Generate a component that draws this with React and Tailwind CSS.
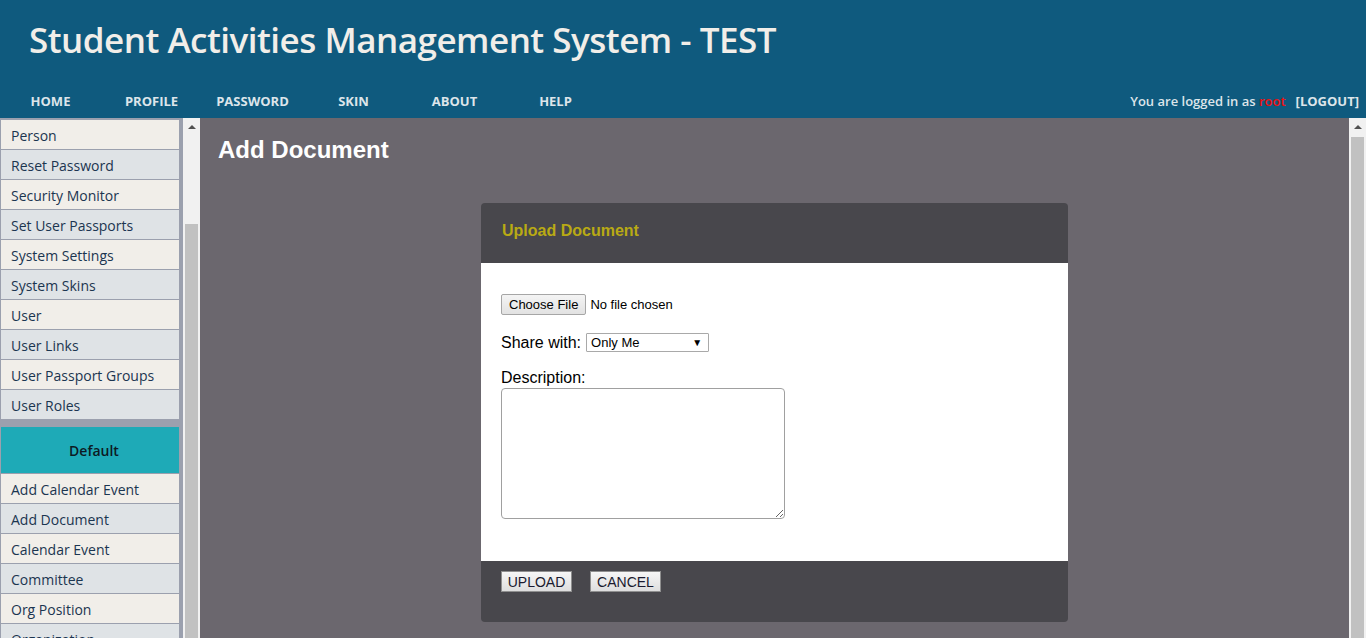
import { useState } from "react";

const navLinks = ["HOME", "PROFILE", "PASSWORD", "SKIN", "ABOUT", "HELP"];

const adminItems = [
  "Person",
  "Reset Password",
  "Security Monitor",
  "Set User Passports",
  "System Settings",
  "System Skins",
  "User",
  "User Links",
  "User Passport Groups",
  "User Roles",
];

const defaultItems = [
  "Add Calendar Event",
  "Add Document",
  "Calendar Event",
  "Committee",
  "Org Position",
  "Organization",
];

function SideItem({ label, index }) {
  return (
    <div
      className={`h-[30px] shrink-0 flex items-center pl-[10px] pt-[1px] border-b border-[#9ba0ae] text-[14px] text-[#1b3550] ${
        index % 2 === 0 ? "bg-[#f1eee9]" : "bg-[#dfe3e6]"
      }`}
    >
      {label}
    </div>
  );
}

function Scrollbar({ thumbTop }) {
  return (
    <div className="w-[17px] shrink-0 h-full bg-[#f1f1f1] flex flex-col items-center">
      <div className="h-[17px] w-full flex items-center justify-center shrink-0">
        <div className="w-0 h-0 border-l-[4px] border-r-[4px] border-b-[4px] border-l-transparent border-r-transparent border-b-[#505050]" />
      </div>
      <div className={`shrink-0 ${thumbTop}`} />
      <div className="flex-1 w-[13px] bg-[#c1c1c1]" />
    </div>
  );
}

export default function App() {
  const [description, setDescription] = useState("");

  return (
    <div
      className="h-[638px] w-full flex flex-col overflow-hidden"
      style={{ fontFamily: "'Open Sans', 'Noto Sans', sans-serif" }}
    >
      {/* HEADER */}
      <header className="h-[118px] shrink-0 bg-[#0f5a7e] flex flex-col">
        <div className="h-[82px] flex items-center pl-[29px] pb-[3px]">
          <h1 className="text-[35px] leading-none font-semibold text-[#f1eee9] tracking-[-0.5px]">
            Student Activities Management System - TEST
          </h1>
        </div>
        <div className="h-[36px] flex items-center pt-[4px]">
          <nav className="flex">
            {navLinks.map((link) => (
              <a
                key={link}
                href="#"
                className="w-[101px] text-center text-[13px] font-bold text-[#dde5ea]"
              >
                {link}
              </a>
            ))}
          </nav>
          <div className="ml-auto pr-[7px] text-[13px] font-semibold text-[#dde5ea]">
            You are logged in as <span className="text-[#ee1111]">root</span>
            <a href="#" className="ml-[10px] font-bold">
              [LOGOUT]
            </a>
          </div>
        </div>
      </header>

      <div className="flex-1 flex min-h-0">
        {/* SIDEBAR */}
        <aside className="w-[200px] shrink-0 flex h-full">
          <div className="w-[183px] h-full bg-[#9ba0ae] border-l border-[#9ba0ae] pr-[4px] pt-[2px] flex flex-col overflow-hidden">
            {adminItems.map((item, i) => (
              <SideItem key={item} label={item} index={i} />
            ))}
            <div className="h-[7px] shrink-0" />
            <div className="h-[47px] shrink-0 bg-[#1eaab7] border-b border-[#9ba0ae] flex items-center justify-center pl-[8px] text-[14px] font-semibold text-[#0d1b24]">
              Default
            </div>
            {defaultItems.map((item, i) => (
              <SideItem key={item} label={item} index={i} />
            ))}
          </div>
          <Scrollbar thumbTop="h-[89px]" />
        </aside>

        {/* MAIN */}
        <main className="flex-1 min-w-0 flex bg-[#6b676e]">
          <div
            className="flex-1 pt-[20px] pl-[18px] pr-[18px]"
            style={{ fontFamily: "'Liberation Sans', Arial, sans-serif" }}
          >
            <h2 className="text-[24px] leading-[24px] font-bold text-white">Add Document</h2>

            <div className="mt-[41px] w-[587px] mx-auto rounded-[4px] overflow-hidden">
              <div className="h-[60px] bg-[#48474c] flex items-center pl-[21px] pb-[4px]">
                <span className="text-[16px] font-bold text-[#b9aa14]">Upload Document</span>
              </div>

              <div className="h-[298px] bg-white pl-[20px] pt-[31px]">
                <div className="flex items-center gap-[4px]">
                  <button
                    type="button"
                    className="h-[21px] px-[7px] border border-[#a6a6a6] rounded-[2px] bg-gradient-to-b from-[#f4f4f4] to-[#e2e2e2] text-[13px] text-black leading-none"
                  >
                    Choose File
                  </button>
                  <span className="text-[13px] text-black">No file chosen</span>
                </div>

                <div className="mt-[18px] h-[19px] flex items-center gap-[5px]">
                  <span className="text-[16px] leading-[19px] text-black">Share with:</span>
                  <div className="w-[123px] h-[19px] border border-[#a9a9a9] rounded-[1px] bg-white pl-[4px] pr-[6px] flex items-center justify-between text-[13px] leading-[17px] text-black">
                    <span>Only Me</span>
                    <span className="text-[10px]">▼</span>
                  </div>
                </div>

                <div className="mt-[17px] text-[16px] leading-[18px] text-black">Description:</div>
                <textarea
                  value={description}
                  onChange={(e) => setDescription(e.target.value)}
                  className="mt-[1px] block w-[284px] h-[131px] border border-[#a0a0a0] rounded-[4px] outline-none resize"
                />
              </div>

              <div className="h-[61px] bg-[#48474c] pl-[20px] pt-[10px] flex items-start gap-[18px]">
                <button
                  type="button"
                  className="w-[71px] h-[21px] border border-[#8f8f8f] bg-gradient-to-b from-[#f6f6f6] to-[#dedede] text-[14px] text-[#1a1a2e] leading-none"
                >
                  UPLOAD
                </button>
                <button
                  type="button"
                  className="w-[71px] h-[21px] border border-[#8f8f8f] bg-gradient-to-b from-[#f6f6f6] to-[#dedede] text-[14px] text-[#1a1a2e] leading-none"
                >
                  CANCEL
                </button>
              </div>
            </div>
          </div>
          <Scrollbar thumbTop="h-[2px]" />
        </main>
      </div>
    </div>
  );
}
